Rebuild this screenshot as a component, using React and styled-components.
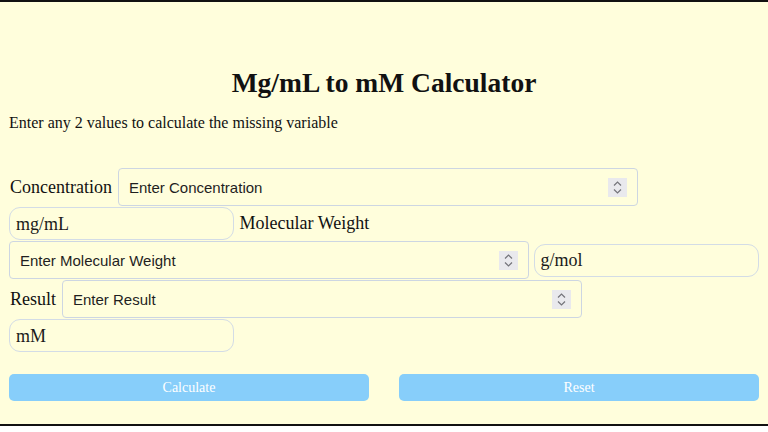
import React, { useState } from 'react';
import styled, { createGlobalStyle } from 'styled-components';

const GlobalStyle = createGlobalStyle`
  html, body {
    margin: 0;
    padding: 0;
    background: #ffffff;
  }
`;

const Page = styled.main`
  box-sizing: border-box;
  height: 426px;
  padding: 0 9px;
  background: #fffedc;
  border-top: 2px solid #111;
  border-bottom: 2px solid #111;
  font-family: "Liberation Serif", "Times New Roman", serif;
  color: #111;
`;

const Title = styled.h1`
  margin: 65px 0 0;
  font-size: 27.5px;
  font-weight: bold;
  line-height: normal;
  text-align: center;
`;

const Subtitle = styled.p`
  margin: 15px 0 0;
  font-size: 16px;
  line-height: normal;
`;

const Form = styled.div`
  display: flex;
  flex-wrap: wrap;
  align-items: center;
  column-gap: 4.5px;
  row-gap: 1px;
  margin-top: 36px;
`;

const Label = styled.label`
  margin: 0 1.5px 0 1px;
  font-size: 18px;
  line-height: normal;
`;

const Field = styled.div`
  box-sizing: border-box;
  display: flex;
  align-items: center;
  width: 520px;
  height: 38px;
  padding: 0 10px;
  border: 1px solid #cdd6e2;
  border-radius: 4px;
`;

const TextInput = styled.input`
  flex: 1;
  min-width: 0;
  padding: 0;
  border: 0;
  outline: none;
  background: transparent;
  font-family: "Liberation Sans", Arial, sans-serif;
  font-size: 15px;
  color: #1f1f1f;

  &::placeholder {
    color: #1f1f1f;
    opacity: 1;
  }
`;

const Spinner = styled.span`
  display: flex;
  flex-direction: column;
  align-items: center;
  justify-content: center;
  gap: 3px;
  width: 19px;
  height: 19px;
  background: #e9e9ed;
`;

const UnitSelect = styled.select`
  box-sizing: border-box;
  width: 225px;
  height: 33px;
  padding: 0 6px;
  border: 1px solid #d3dce6;
  border-radius: 11px;
  background: transparent;
  appearance: none;
  font-family: "Liberation Serif", "Times New Roman", serif;
  font-size: 18px;
  color: #1a1a1a;
  outline: none;
`;

const Actions = styled.div`
  display: flex;
  justify-content: space-between;
  margin-top: 22px;
`;

const Button = styled.button`
  width: 48%;
  height: 27px;
  border: 0;
  border-radius: 5px;
  background: #87cefa;
  color: #ffffff;
  font-family: "Liberation Serif", "Times New Roman", serif;
  font-size: 14px;
  cursor: pointer;
`;

const Chevron = ({ up }) => (
  <svg width="9" height="5" viewBox="0 0 9 5" fill="none">
    <path
      d={up ? 'M1 4.5 L4.5 1 L8 4.5' : 'M1 0.5 L4.5 4 L8 0.5'}
      stroke="#74747a"
      strokeWidth="1.2"
    />
  </svg>
);

const NumberField = ({ placeholder, value, onChange }) => (
  <Field>
    <TextInput
      type="text"
      inputMode="decimal"
      placeholder={placeholder}
      value={value}
      onChange={e => onChange(e.target.value)}
    />
    <Spinner>
      <Chevron up />
      <Chevron />
    </Spinner>
  </Field>
);

const Unit = ({ options }) => (
  <UnitSelect>
    {options.map(o => <option key={o}>{o}</option>)}
  </UnitSelect>
);

export default function App() {
  const [conc, setConc] = useState('');
  const [mw, setMw] = useState('');
  const [result, setResult] = useState('');

  const calculate = () => {
    const c = parseFloat(conc);
    const w = parseFloat(mw);
    const r = parseFloat(result);
    if (!isNaN(c) && !isNaN(w)) setResult(String((c / w) * 1000));
    else if (!isNaN(c) && !isNaN(r)) setMw(String((c / r) * 1000));
    else if (!isNaN(w) && !isNaN(r)) setConc(String((r * w) / 1000));
  };

  const reset = () => {
    setConc('');
    setMw('');
    setResult('');
  };

  return (
    <>
      <GlobalStyle />
      <Page>
        <Title>Mg/mL to mM Calculator</Title>
        <Subtitle>Enter any 2 values to calculate the missing variable</Subtitle>

        <Form>
          <Label>Concentration</Label>
          <NumberField placeholder="Enter Concentration" value={conc} onChange={setConc} />
          <Unit options={['mg/mL', 'g/L', 'µg/mL']} />

          <Label>Molecular Weight</Label>
          <NumberField placeholder="Enter Molecular Weight" value={mw} onChange={setMw} />
          <Unit options={['g/mol', 'kDa']} />

          <Label>Result</Label>
          <NumberField placeholder="Enter Result" value={result} onChange={setResult} />
          <Unit options={['mM', 'M', 'µM']} />
        </Form>

        <Actions>
          <Button onClick={calculate}>Calculate</Button>
          <Button onClick={reset}>Reset</Button>
        </Actions>
      </Page>
    </>
  );
}
